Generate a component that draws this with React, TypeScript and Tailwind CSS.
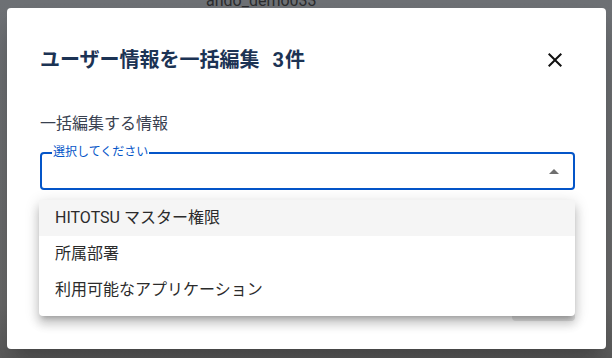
import React from "react";

const font = { fontFamily: '"Roboto", "Noto Sans CJK JP", sans-serif' };

const CloseIcon: React.FC = () => (
  <svg width="24" height="24" viewBox="0 0 24 24" fill="#111">
    <path d="M19 6.41 17.59 5 12 10.59 6.41 5 5 6.41 10.59 12 5 17.59 6.41 19 12 13.41 17.59 19 19 17.59 13.41 12z" />
  </svg>
);

const App: React.FC = () => {
  const options = ["HITOTSU マスター権限", "所属部署", "利用可能なアプリケーション"];

  return (
    <div
      className="relative w-[612px] h-[358px] overflow-hidden bg-[linear-gradient(#6e7175,#6a6a6a_85%,#5c5c5c)]"
      style={font}
    >
      {/* page behind backdrop */}
      <div className="absolute left-[206px] top-[-11px] text-[16px] text-[#2a2b2d]">ando_demo033</div>

      {/* Dialog */}
      <div className="absolute left-[7px] top-[8px] w-[599px] h-[341px] rounded-[4px] bg-white shadow-[0_11px_15px_-7px_rgba(0,0,0,0.2),0_24px_38px_3px_rgba(0,0,0,0.14)]">
        <div className="flex flex-col pl-[33px] pt-[40px]">
          {/* Header */}
          <div className="flex items-center justify-between pr-[39px] h-[24px]">
            <h2 className="flex text-[20px] font-bold leading-[24px] text-[#1c3354]">
              <span>ユーザー情報を一括編集</span>
              <span className="ml-[13px] tracking-[1px]">3件</span>
            </h2>
            <CloseIcon />
          </div>

          {/* Label */}
          <div className="mt-[40px] text-[16px] leading-[24px] text-[#394150]">一括編集する情報</div>

          {/* Select */}
          <div className="relative mt-[16px] w-[535px] h-[38px] rounded-[4px] border-2 border-[#0455c8]">
            <span className="absolute left-[10px] top-[-9px] bg-white px-[1px] text-[12px] leading-[14px] text-[#0455c8]">
              選択してください
            </span>
            <svg className="absolute right-[7px] top-[6px]" width="24" height="24" viewBox="0 0 24 24" fill="#6f6f6f">
              <path d="m7 14 5-5 5 5z" />
            </svg>
          </div>

          {/* Footer button (under the menu) */}
          <div className="flex justify-end pr-[31px] mt-[95px]">
            <div className="w-[63px] h-[36px] rounded-[4px] bg-[#e6e6e6]" />
          </div>
        </div>
      </div>

      {/* Dropdown menu */}
      <div className="absolute left-[39px] top-[200px] w-[536px] rounded-[4px] bg-white pb-[8px] shadow-[0_5px_5px_-3px_rgba(0,0,0,0.2),0_8px_10px_1px_rgba(0,0,0,0.14),0_3px_14px_2px_rgba(0,0,0,0.12)]">
        {options.map((o, i) => (
          <div
            key={o}
            className={`flex items-center h-[36px] px-[16px] text-[16px] text-[#2b2b2b] ${i === 0 ? "bg-[#f5f5f5]" : ""}`}
          >
            {o}
          </div>
        ))}
      </div>
    </div>
  );
};

export default App;
